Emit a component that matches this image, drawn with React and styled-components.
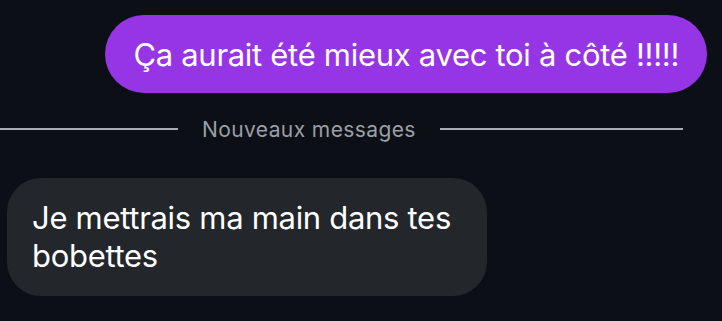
import React from "react";
import styled, { createGlobalStyle } from "styled-components";

const Global = createGlobalStyle`
  html, body { margin: 0; padding: 0; background: #0c0f15; }
  body { font-family: Inter, "Noto Sans", sans-serif; -webkit-font-smoothing: antialiased; }
`;

const Page = styled.div`
  width: 722px;
  height: 321px;
  background: #0c0f15;
  display: flex;
  flex-direction: column;
  overflow: hidden;
`;

const Row = styled.div`
  display: flex;
  justify-content: ${(p) => (p.$out ? "flex-end" : "flex-start")};
  padding: ${(p) => (p.$out ? "15px 15px 0 0" : "31px 0 0 7px")};
`;

const Bubble = styled.div`
  box-sizing: border-box;
  color: #ffffff;
  font-size: 31px;
  letter-spacing: -0.3px;
  white-space: ${(p) => (p.$out ? "nowrap" : "normal")};
  background: ${(p) => (p.$out ? "#9535e6" : "#23262b")};
  ${(p) =>
    p.$out
      ? `
    height: 78px;
    border-radius: 39px;
    padding: 0 28px 0 28px;
    display: flex;
    align-items: center;
  `
      : `
    width: 480px;
    height: 118px;
    border-radius: 34px;
    padding: 21px 20px 0 25px;
    line-height: 38px;
  `}
`;

const Divider = styled.div`
  display: flex;
  align-items: center;
  gap: 24px;
  margin: 18px 39px 0 0;
  height: 36px;
`;

const Line = styled.div`
  flex: ${(p) => (p.$w ? `0 0 ${p.$w}px` : "1")};
  height: 2px;
  background: #a9acb2;
`;

const Label = styled.span`
  color: #9b9fa6;
  font-size: 21px;
  letter-spacing: 0.4px;
  white-space: nowrap;
`;

export default function App() {
  return (
    <Page>
      <Global />
      <Row $out>
        <Bubble $out>Ça aurait été mieux avec toi à côté !!!!!</Bubble>
      </Row>
      <Divider>
        <Line $w={178} />
        <Label>Nouveaux messages</Label>
        <Line />
      </Divider>
      <Row>
        <Bubble>Je mettrais ma main dans tes bobettes</Bubble>
      </Row>
    </Page>
  );
}
